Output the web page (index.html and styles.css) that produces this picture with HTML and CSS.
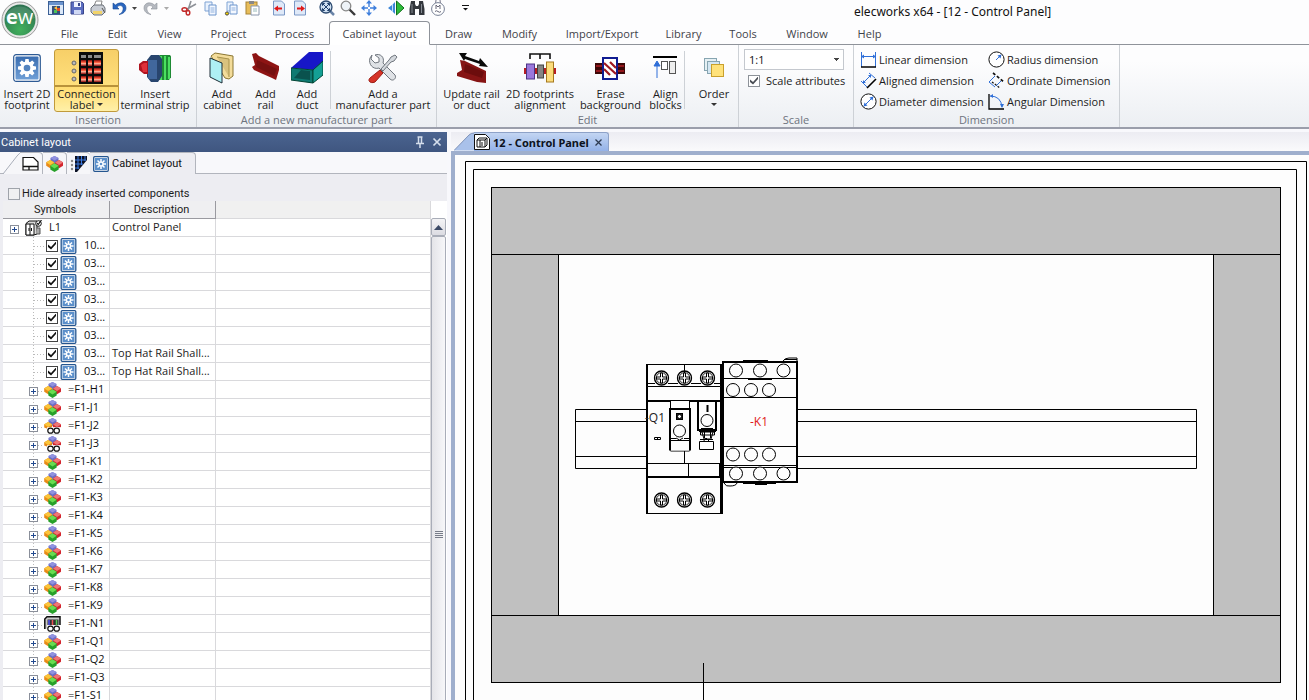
FILE: index.html
```html
<!DOCTYPE html>
<html lang="en">
<head>
<meta charset="utf-8">
<title>elecworks x64 - [12 - Control Panel]</title>
<link rel="stylesheet" href="styles.css">
</head>
<body>
<svg class="defs" aria-hidden="true">
  <defs>
    <linearGradient id="gBlue" x1="0" y1="0" x2="0" y2="1"><stop offset="0" stop-color="#3a6db0"/><stop offset="1" stop-color="#6f9fd6"/></linearGradient>
    <radialGradient id="gLogo" cx=".5" cy=".8" r=".8"><stop offset="0" stop-color="#42b05c"/><stop offset="1" stop-color="#2c7050"/></radialGradient>
    <linearGradient id="gRed" x1="0" y1="0" x2="0" y2="1"><stop offset="0" stop-color="#7c0a0a"/><stop offset=".4" stop-color="#ff5a3c"/><stop offset=".6" stop-color="#ffb29a"/><stop offset="1" stop-color="#8c0a0a"/></linearGradient>
    <symbol id="gear" viewBox="0 0 28 28">
      <rect x=".7" y=".7" width="26.600" height="26.600" rx="2.500" fill="#fff" stroke="#2d5a94" stroke-width="1.200"/>
      <rect x="2.500" y="2.500" width="23" height="23" rx="1" fill="url(#gBlue)"/>
      <g fill="#fff"><circle cx="14" cy="14" r="6.500"/><path d="M12.400 5h3.200l.7 4h-4.600zM12.400 23h3.200l.7-4h-4.600zM5 12.400v3.200l4 .7v-4.600zM23 12.400v3.200l-4 .7v-4.600zM6.500 8.800l2.300-2.300 3.300 2.400-3.200 3.200zM21.500 8.800l-2.300-2.300-3.300 2.400 3.200 3.200zM6.500 19.200l2.300 2.300 3.300-2.400-3.200-3.200zM21.500 19.200l-2.300 2.300-3.300-2.400 3.200-3.200z"/></g>
      <circle cx="14" cy="14" r="3.300" fill="#5484bf"/>
    </symbol>
    <symbol id="flake" viewBox="0 0 16 16">
      <rect x=".7" y=".7" width="14.600" height="14.600" rx="1" fill="#fff" stroke="#24558f" stroke-width="1.300"/>
      <rect x="2" y="2" width="12" height="12" fill="#5b8fca"/>
      <path d="M8 3v10M3 8h10M4.500 4.500l7 7M11.500 4.500l-7 7" stroke="#fff" stroke-width="1.500"/><circle cx="8" cy="8" r="2.600" fill="#fff"/><circle cx="8" cy="8" r="1.300" fill="#5b8fca"/>
    </symbol>
    <symbol id="cubes" viewBox="0 0 17 16">
      <path d="M8.500 0l4 2v3.500L8.500 8l-4-2.500V2z" fill="#6c6fc6"/><path d="M8.500 0l4 2-4 2.500-4-2.500z" fill="#9192e0"/>
      <path d="M13 4l4 2.200v3.600l-4 2.400-4-2.400V6.200z" fill="#d2252e"/><path d="M13 4l4 2.400-4 2.600-4-2.600z" fill="#ee7676"/>
      <path d="M4.200 4l4 2.200v3.600l-4 2.400-4-2.400V6.200z" fill="#e88a18"/><path d="M4.200 4l4 2.400-4 2.600-4-2.600z" fill="#fbc63a"/>
      <path d="M8.500 7.300l4.200 2.500v3.700L8.500 16l-4.200-2.500V9.800z" fill="#27a02a"/><path d="M8.500 7.300l4.200 2.500-4.200 2.700-4.200-2.700z" fill="#68dc50"/>
    </symbol>
    <symbol id="cubesoo" viewBox="0 0 17 16">
      <path d="M8.500 0l4 2v3.500L8.500 8l-4-2.500V2z" fill="#6c6fc6"/><path d="M8.500 0l4 2-4 2.500-4-2.500z" fill="#9192e0"/>
      <path d="M13 4l4 2.200V9.500H9V6.200z" fill="#d2252e"/><path d="M13 4l4 2.400-4 2.600-4-2.600z" fill="#ee7676"/>
      <path d="M4.200 4l4 2.200V9L4 11 .2 9.600V6.200z" fill="#e88a18"/><path d="M4.200 4l4 2.400-4 2.600-4-2.600z" fill="#fbc63a"/>
      <rect x="3" y="9.300" width="14" height="6.700" fill="#fff"/>
      <ellipse cx="6.500" cy="12.700" rx="2.700" ry="2.500" fill="#fff" stroke="#111" stroke-width="1.200"/><ellipse cx="12.700" cy="12.700" rx="2.700" ry="2.500" fill="#fff" stroke="#111" stroke-width="1.200"/>
    </symbol>
    <symbol id="plcoo" viewBox="0 0 17 16">
      <path d="M.8 13V3L3 .8h13V9" fill="#c9c9c9" stroke="#111" stroke-width="1.500"/><rect x="3.500" y="3.500" width="11" height="5.500" fill="#333"/><path d="M5 4v5" stroke="#55f" stroke-width="1.500"/><path d="M8.500 4v5" stroke="#e55" stroke-width="1.500"/><path d="M12.500 4v5" stroke="#5c5" stroke-width="1.500"/>
      <rect x="3" y="9.300" width="14" height="6.700" fill="#fff"/>
      <ellipse cx="6.500" cy="12.700" rx="2.700" ry="2.500" fill="#fff" stroke="#111" stroke-width="1.200"/><ellipse cx="12.700" cy="12.700" rx="2.700" ry="2.500" fill="#fff" stroke="#111" stroke-width="1.200"/>
    </symbol>
    <symbol id="plus" viewBox="0 0 9 9"><rect x=".5" y=".5" width="8" height="8" fill="#fff" stroke="#8a8f9a"/><path d="M2 4.500h5M4.500 2v5" stroke="#234a90"/></symbol>
    <symbol id="screw" viewBox="-8 -8 16 16"><circle r="7" fill="none" stroke="#000" stroke-width="1.400"/><circle r="5.300" fill="none" stroke="#000" stroke-width=".8"/><path d="M-1-5h2v4h4v2H1v4h-2V1h-4v-2h4z" fill="#fff" stroke="#000"/></symbol>
  </defs>
</svg>

<header class="top">
  <button class="logo" aria-label="Application menu">
    <svg viewBox="0 0 38 38"><circle cx="19" cy="19" r="18" fill="#e9e9e9" stroke="#9a9a9a"/><circle cx="19" cy="19" r="15.500" fill="url(#gLogo)"/><path d="M4 17a15.500 15.500 0 0 1 30 0Q19 23 4 17z" fill="#fff" opacity=".12"/></svg>
    <span class="logo-text"><b>e</b>w</span>
  </button>
  <div class="top-main">
    <div class="title-row">
      <div class="quick">
        <svg class="q" viewBox="0 0 16 16"><rect x=".5" y="1.500" width="15" height="13" fill="#dce8f8" stroke="#3b5f95"/><path d="M1 2h14v3H1z" fill="#6a93cf"/><path d="M4 6h8v8H4z" fill="#35507c"/><path d="M6 8l3-2v4z" fill="#ffc83c"/><path d="M9 8h3v3H9z" fill="#e34c26"/><path d="M6 10h3v3H6z" fill="#4cc25a"/></svg>
        <svg class="q" viewBox="0 0 16 16"><path d="M2 2h11l1.500 1.500V14H2z" fill="#5a6cc0" stroke="#38458c"/><path d="M5 2h7v5H5z" fill="#eef2ff"/><path d="M5 10h7v4H5z" fill="#cfd8f4"/><path d="M9 3h2v3H9z" fill="#38458c"/></svg>
        <svg class="q" viewBox="0 0 16 16"><path d="M4 6l2-5h6l-1 5z" fill="#fff" stroke="#888"/><path d="M1 8l3-3h9l2 3v4l-3 3H4l-3-3z" fill="#c9cdd4" stroke="#6b7078"/><path d="M3 11h9v3H3z" fill="#f1d36a"/><path d="M12 8l3 5" stroke="#555"/></svg>
        <svg class="q" viewBox="0 0 16 16"><path d="M2 3v6h6L6 7c3-3 7-1 6 3-.5 2-2 3.500-4 4.500 4-.5 7-3 7-6.500C15 3 9 1 4.500 5z" fill="#2a66c0" stroke="#174a94" stroke-width=".6"/></svg>
        <svg class="caret" viewBox="0 0 5 3"><path d="M0 0h5L2.500 3z" fill="#444"/></svg>
        <svg class="q" viewBox="0 0 16 16"><path d="M14 3v6H8l2-2c-3-3-7-1-6 3 .5 2 2 3.500 4 4.500-4-.5-7-3-7-6.500C1 3 7 1 11.500 5z" fill="#b5b9c0" stroke="#8e939c" stroke-width=".6"/></svg>
        <svg class="caret" viewBox="0 0 5 3"><path d="M0 0h5L2.500 3z" fill="#aaa"/></svg>
        <svg class="q q-lead" viewBox="0 0 16 16"><path d="M15 4L6 9M10 1L7 10" stroke="#8e9298" stroke-width="1.600"/><ellipse cx="3.500" cy="9.500" rx="2.500" ry="1.800" fill="none" stroke="#c22b2b" stroke-width="1.500"/><ellipse cx="7" cy="12.800" rx="1.800" ry="2.300" fill="none" stroke="#c22b2b" stroke-width="1.500"/></svg>
        <svg class="q" viewBox="0 0 16 16"><path d="M3 2h7v9H3z" fill="#eaf2fd" stroke="#7ea3d4"/><path d="M7 5h7v10H7z" fill="#f4f8ff" stroke="#6d95cc"/><path d="M8.500 8h4M8.500 10h4M8.500 12h4" stroke="#8fb0dd"/></svg>
        <svg class="q" viewBox="0 0 16 16"><path d="M4 2h6v9H4z" fill="#eaf2fd" stroke="#7ea3d4"/><path d="M7 5h7v9H7z" fill="#f4f8ff" stroke="#6d95cc"/><path d="M8.500 8h4M8.500 10h4" stroke="#8fb0dd"/><circle cx="4" cy="13.500" r="1.600" fill="#f5d400" stroke="#444"/></svg>
        <svg class="q" viewBox="0 0 16 16"><rect x="2" y="2" width="11" height="12" fill="#e8bd5a" stroke="#a88434"/><rect x="5" y="1" width="5" height="3" fill="#888"/><path d="M7 6h8v9H7z" fill="#fff" stroke="#8a97ad"/><path d="M9 9h4M9 11h4" stroke="#9bb"/></svg>
        <svg class="q q-lead" viewBox="0 0 16 16"><path d="M2.500 1h8l3 3v11h-11z" fill="#dfe9f8" stroke="#7b98c6"/><path d="M3 8.500l4-3v2h4v2H7v2z" fill="#e01818"/></svg>
        <svg class="q" viewBox="0 0 16 16"><path d="M2.500 1h8l3 3v11h-11z" fill="#dfe9f8" stroke="#7b98c6"/><path d="M13 8.500l-4-3v2H5v2h4v2z" fill="#e01818"/></svg>
        <svg class="q q-lead" viewBox="0 0 16 16"><path d="M10 10l5 5" stroke="#6a84a8" stroke-width="2.500"/><circle cx="7" cy="7" r="6" fill="#cfe0f2" stroke="#2c4a70" stroke-width="1.300"/><path d="M3.500 3.500h2l-2 2zM10.500 3.500h-2l2 2zM3.500 10.500h2l-2-2zM10.500 10.500h-2l2-2zM4 4l6 6M10 4l-6 6" fill="#20406c" stroke="#20406c"/></svg>
        <svg class="q" viewBox="0 0 16 16"><path d="M9 9l6 6" stroke="#3a3a3a" stroke-width="2.400"/><circle cx="6" cy="6" r="4.800" fill="#eef3f8" stroke="#888" stroke-width="1.300"/></svg>
        <svg class="q" viewBox="0 0 16 16"><path d="M8 1v14M1 8h14" stroke="#3f7fdc" stroke-width="1.400"/><path d="M8 0l3 3.500H5zM8 16l3-3.500H5zM0 8l3.500-3v6zM16 8l-3.500-3v6z" fill="#3f7fdc"/><rect x="7" y="7" width="2" height="2" fill="#fff"/></svg>
        <svg class="q q-lead" viewBox="0 0 16 16"><path d="M7 2v12l-3-3L0 8l4-3z" fill="#3c86d8"/><path d="M4.500 4v8" stroke="#bfe0f8"/><path d="M8.500 1l7.500 7-7.500 7z" fill="#2ebc3c" stroke="#12701c"/></svg>
        <svg class="q" viewBox="0 0 16 16"><path d="M2 1h4v3l1 2h2l1-2V1h4l1.500 8v6H10V9H6v6H.5V9z" fill="#33373d"/><path d="M3 4v9M12.500 4v9" stroke="#858b93"/></svg>
        <svg class="q" viewBox="0 0 16 16"><path d="M5.500 4L6 0M10.500 4L10 0" stroke="#778"/><circle cx="8" cy="9" r="6.400" fill="#fff" stroke="#778095"/><path d="M6 9V5l2 2 2-2v4M5 11.500q1.500-1.500 3 0t3 0" fill="none" stroke="#667"/></svg>
        <svg class="more" viewBox="0 0 7 6"><path d="M0 .5h7" stroke="#111"/><path d="M1 3h5L3.500 5.500z" fill="#111"/></svg>
      </div>
      <h1 class="title">elecworks x64 - [12 - Control Panel]</h1>
    </div>
    <nav class="menu">
      <button>File</button><button>Edit</button><button>View</button><button>Project</button><button>Process</button><button class="active">Cabinet layout</button><button>Draw</button><button>Modify</button><button>Import/Export</button><button>Library</button><button>Tools</button><button>Window</button><button>Help</button>
    </nav>
  </div>
</header>

<section class="ribbon">
  <div class="group g-insert">
    <div class="tools">
      <button class="tool"><svg class="ico"><use href="#gear" x="2" y="2" width="28" height="28"/></svg><span>Insert 2D<br>footprint</span></button>
      <button class="tool pressed"><svg class="ico" viewBox="0 0 32 32"><rect x="8" y="0" width="24" height="32" fill="#0b0b0b"/><g fill="#8b8b8b"><rect x="10" y="3" width="5" height="3"/><rect x="17" y="3" width="4" height="3"/><rect x="23" y="3" width="7" height="3"/></g><g fill="url(#gRed)"><rect x="10" y="8" width="5" height="6"/><rect x="17" y="8" width="4" height="6"/><rect x="23" y="8" width="7" height="6"/><rect x="10" y="16" width="5" height="6"/><rect x="17" y="16" width="4" height="6"/><rect x="23" y="16" width="7" height="6"/><rect x="10" y="24" width="5" height="6"/><rect x="17" y="24" width="4" height="6"/><rect x="23" y="24" width="7" height="6"/></g><g fill="#bbb" stroke="#666"><circle cx="3" cy="11" r="2"/><circle cx="3" cy="19" r="2"/><circle cx="3" cy="27" r="2"/></g></svg><span>Connection<br>label <i class="arrow"></i></span></button>
      <button class="tool"><svg class="ico" viewBox="0 0 32 32"><path d="M18 5l3-2h10l2 3v18l-3 4H18z" fill="#1e8a34"/><path d="M22 4v24M26 4v24M30 5v22" stroke="#4be060" stroke-width="2"/><path d="M8 8l4-5h8l3 4v17l-4 6h-7l-4-5z" fill="#28456e"/><path d="M9 8h9v19H9z" fill="#41679c"/><path d="M0 12l4-3h5v13H5l-5-4z" fill="#b01420"/><path d="M2 13l3-2h3v9H4z" fill="#e0303a"/></svg><span>Insert<br>terminal strip</span></button>
    </div>
    <div class="caption">Insertion</div>
  </div>
  <div class="group g-part">
    <div class="tools">
      <button class="tool"><svg class="ico" viewBox="0 0 32 32"><path d="M5 4l4-3 18 3v20l-4 3-4-1z" fill="#f3dc9a" stroke="#8a7632"/><path d="M11 5l12 2v18" fill="#d9c27e" stroke="#a8924a"/><path d="M4 6l12 5v20L4 25z" fill="#aef0f4" stroke="#1c2d36"/></svg><span>Add<br>cabinet</span></button>
      <button class="tool"><svg class="ico" viewBox="0 0 32 32"><path d="M2 2l4-1 3 3 20 10v4l-3 10-4-2L4 18l-2-3 3-2z" fill="#8e1414"/><path d="M7 8l20 9-3 7L6 15z" fill="#761010"/></svg><span>Add<br>rail</span></button>
      <button class="tool"><svg class="ico" viewBox="0 0 32 32"><path d="M0 16L18 0h14v11L22 18z" fill="#1717c8"/><path d="M0 16l22 2v13L0 28z" fill="#0e7a72" stroke="#043"/><path d="M22 18L32 9v14l-10 8z" fill="#14a095" stroke="#043"/><path d="M3 26l7-8 9 1v9z" fill="#0a524e"/></svg><span>Add<br>duct</span></button>
      <i class="bar"></i>
      <button class="tool"><svg class="ico" viewBox="0 0 32 32"><path d="M5 3L4 7l4 4 4-1v-4L8 3c5-2 10 2 8 8l12 12c2 3-2 7-5 4L12 16C6 18 1 12 3 6z" fill="#dfe2e6" stroke="#71777f"/><path d="M28 3l2 2-3 4-3 1-8 9-2-2 8-9 2-3z" fill="#d4d8dd" stroke="#71777f"/><path d="M13 18l3 3-8 9c-4 2-8-1-5-4z" fill="#d63328" stroke="#9c1e14"/></svg><span>Add a<br>manufacturer part</span></button>
    </div>
    <div class="caption">Add a new manufacturer part</div>
  </div>
  <div class="group g-edit">
    <div class="tools">
      <button class="tool"><svg class="ico" viewBox="0 0 32 32"><path d="M3 1l8 0-2 3 14 5 1-3 8 9-9-1 1-2L9 7 8 9z" fill="#0a0a0a"/><path d="M4 8l5 1 21 10v12l-9-1L1 24v-3l5-3z" fill="#861414"/><path d="M9 12l19 8-2 6L8 20z" fill="#6c0d0d"/></svg><span>Update rail<br>or duct</span></button>
      <button class="tool"><svg class="ico" viewBox="0 0 32 32"><path d="M6 7V2h20v5M16 2v5" fill="none" stroke="#111" stroke-width="1.600"/><rect x="0" y="16" width="32" height="6" fill="#b61e24"/><rect x="2.500" y="12" width="8" height="15" fill="#9a78dc" stroke="#4c3586"/><rect x="13.500" y="13" width="6" height="13" fill="#858585" stroke="#444"/><rect x="22.500" y="10" width="7" height="20" fill="#fbdc7c" stroke="#a5781e"/></svg><span>2D footprints<br>alignment</span></button>
      <button class="tool"><svg class="ico" viewBox="0 0 32 32"><rect x="1" y="11" width="30" height="11" fill="#3c0707"/><path d="M2 14h28M2 19h28" stroke="#b01c24" stroke-width="1.500"/><rect x="9" y="6" width="14" height="21" fill="#fff" stroke="#101c92" stroke-width="2"/><path d="M10 11l12 11M10 17l6 6M16 10l6 6" stroke="#a01820" stroke-width="2.200"/></svg><span>Erase<br>background</span></button>
      <button class="tool"><svg class="ico" viewBox="0 0 32 32"><path d="M4 5h24" stroke="#000" stroke-width="2"/><path d="M8 26V12M5 14l3-5 3 5z" fill="#2f6fd8" stroke="#2f6fd8"/><rect x="12.500" y="9.500" width="6" height="8" fill="#fff" stroke="#555"/><rect x="20.500" y="9.500" width="6" height="12" fill="#eee" stroke="#555"/></svg><span>Align<br>blocks</span></button>
      <i class="bar"></i>
      <button class="tool"><svg class="ico" viewBox="0 0 32 32"><rect x="6.500" y="6.500" width="12" height="12" fill="#e5f0f4" stroke="#87a5b1"/><rect x="9.500" y="9.500" width="12" height="12" fill="#d4e7f3" stroke="#87a5b1"/><rect x="13.500" y="12.500" width="12" height="12" fill="#ffe27a" stroke="#c9a02c"/></svg><span>Order<br><i class="arrow"></i></span></button>
    </div>
    <div class="caption">Edit</div>
  </div>
  <div class="group g-scale">
    <div class="scale-body">
      <select aria-label="Scale"><option>1:1</option></select>
      <label class="scale-check"><input type="checkbox" class="cb grey" checked>Scale attributes</label>
    </div>
    <div class="caption">Scale</div>
  </div>
  <div class="group g-dim">
    <div class="dims">
      <button class="dim"><svg viewBox="0 0 17 17"><path d="M1.500 1v15M15.500 1v15M1 5.500h15" fill="none" stroke="#2f6fd8"/><path d="M1 16h15" stroke="#000" stroke-width="1.500"/><path d="M1 5.500l3-2v4zM16 5.500l-3-2v4z" fill="#2f6fd8"/></svg>Linear dimension</button>
      <button class="dim"><svg viewBox="0 0 17 17"><path d="M1 9l6 6M9 1l6 5M3 11l8-8" stroke="#2f6fd8"/><path d="M3 11l3 0-3-3zM11 3v3l-3-3z" fill="#2f6fd8"/><path d="M7 16l9-9" stroke="#000" stroke-width="1.600"/></svg>Aligned dimension</button>
      <button class="dim"><svg viewBox="0 0 17 17"><circle cx="8.500" cy="8.500" r="7.600" fill="#fff" stroke="#111"/><path d="M4 13l9-9" stroke="#2f6fd8"/><path d="M3.500 13.500l1-4 3 3zM13.500 3.500l-4 1 3 3z" fill="#2f6fd8"/></svg>Diameter dimension</button>
      <button class="dim"><svg viewBox="0 0 17 17"><circle cx="8.500" cy="8.500" r="7.600" fill="#fff" stroke="#111"/><path d="M8 9l5-5" stroke="#2f6fd8"/><path d="M13.500 3.500l-4 1 3 3z" fill="#2f6fd8"/></svg>Radius dimension</button>
      <button class="dim"><svg viewBox="0 0 17 17"><path d="M5 1l11 9" stroke="#111" stroke-width="1.700" stroke-dasharray="3 2"/><path d="M7 4L1 10l6 5M13 9l-5 5" stroke="#2f6fd8" fill="none"/><path d="M4 10l8 6" stroke="#111" stroke-width="1.300" stroke-dasharray="2 1.500"/></svg>Ordinate Dimension</button>
      <button class="dim"><svg viewBox="0 0 17 17"><path d="M1 1v15h15" fill="none" stroke="#000" stroke-width="1.300"/><path d="M2 3Q13 3 14 14" fill="none" stroke="#2f6fd8"/><path d="M14 15l-2-4h4zM2 3l3-2v4z" fill="#2f6fd8"/></svg>Angular Dimension</button>
    </div>
    <div class="caption">Dimension</div>
  </div>
</section>

<main class="work">
  <aside class="dock">
    <div class="dock-head"><h2>Cabinet layout</h2>
      <button aria-label="Pin"><svg viewBox="0 0 10 12"><path d="M2.500 1h5M3.500 1v6M6.500 1v6M1 7.500h8M5 8v4" stroke="#d5deec" stroke-width="1.500"/></svg></button>
      <button aria-label="Close"><svg viewBox="0 0 10 12"><path d="M1.500 2.500l7 7M8.500 2.500l-7 7" stroke="#d5deec" stroke-width="1.700"/></svg></button>
    </div>
    <div class="dock-tabs">
      <svg class="slant" viewBox="0 0 20 22"><path d="M3 22L17 4q2-3 5-3.500V22z" fill="#f6f6f9"/><path d="M3 22L17 4q2-3 5-3.500" fill="none" stroke="#a9aeb9"/></svg>
      <button class="dtab first" aria-label="Documents"><svg viewBox="0 0 17 16"><path d="M1 14V1.500h10.500L16 6v8z" fill="#fff" stroke="#111" stroke-width="1.200"/><path d="M1 10.500h15M7 10.500V14" stroke="#111" stroke-width="1.300"/></svg></button>
      <button class="dtab" aria-label="Components"><svg><use href="#cubes" width="17" height="16"/></svg></button>
      <button class="dtab last" aria-label="Terminals"><svg viewBox="0 0 17 16"><path d="M5 0h12v4L7 16H5z" fill="#0c1226"/><path d="M8 0v13M11.500 0v9M15 0v5M5 4h11M5 8h8M5 12h4" stroke="#3c7ae0"/><g fill="#888"><circle cx="2" cy="5" r="1.200"/><circle cx="2" cy="9" r="1.200"/><circle cx="2" cy="13" r="1.200"/></g></svg></button>
      <button class="dtab on"><svg><use href="#flake" width="16" height="16"/></svg><span>Cabinet layout</span></button>
    </div>
    <div class="dock-body">
      <label class="hide"><input type="checkbox" class="cb flat">Hide already inserted components</label>
      <div class="list">
        <table class="tree">
          <colgroup><col class="c1"><col class="c2"><col></colgroup>
          <thead><tr><th>Symbols</th><th>Description</th><td></td></tr></thead>
          <tbody>
            <tr><td><div class="node root"><svg class="pm"><use href="#plus"/></svg><svg viewBox="0 0 17 16"><path d="M1 3.500L4 1h8v13l-3 1H1z" fill="#d8d8d8" stroke="#111"/><path d="M1 4h8v11H1zM5 4v11" fill="#fff" stroke="#111"/><path d="M4 8v3M6.500 8v3" stroke="#111"/><path d="M12 8h3v6h-4" fill="#aaa" stroke="#555"/><circle cx="13.500" cy="3.500" r="2.800" fill="#fff" stroke="#111"/><path d="M12 3l1.200 1.500L16.500 0" fill="none" stroke="#111" stroke-width="1.200"/></svg><span>L1</span></div></td><td>Control Panel</td><td></td></tr>
            <tr><td><label class="node leaf"><input type="checkbox" class="cb" checked><svg><use href="#flake"/></svg><span>10...</span></label></td><td></td><td></td></tr>
            <tr><td><label class="node leaf"><input type="checkbox" class="cb" checked><svg><use href="#flake"/></svg><span>03...</span></label></td><td></td><td></td></tr>
            <tr><td><label class="node leaf"><input type="checkbox" class="cb" checked><svg><use href="#flake"/></svg><span>03...</span></label></td><td></td><td></td></tr>
            <tr><td><label class="node leaf"><input type="checkbox" class="cb" checked><svg><use href="#flake"/></svg><span>03...</span></label></td><td></td><td></td></tr>
            <tr><td><label class="node leaf"><input type="checkbox" class="cb" checked><svg><use href="#flake"/></svg><span>03...</span></label></td><td></td><td></td></tr>
            <tr><td><label class="node leaf"><input type="checkbox" class="cb" checked><svg><use href="#flake"/></svg><span>03...</span></label></td><td></td><td></td></tr>
            <tr><td><label class="node leaf"><input type="checkbox" class="cb" checked><svg><use href="#flake"/></svg><span>03...</span></label></td><td>Top Hat Rail Shall...</td><td></td></tr>
            <tr><td><label class="node leaf"><input type="checkbox" class="cb" checked><svg><use href="#flake"/></svg><span>03...</span></label></td><td>Top Hat Rail Shall...</td><td></td></tr>
            <tr><td><div class="node comp"><svg class="pm"><use href="#plus"/></svg><svg><use href="#cubes"/></svg><span>=F1-H1</span></div></td><td></td><td></td></tr>
            <tr><td><div class="node comp"><svg class="pm"><use href="#plus"/></svg><svg><use href="#cubes"/></svg><span>=F1-J1</span></div></td><td></td><td></td></tr>
            <tr><td><div class="node comp"><svg class="pm"><use href="#plus"/></svg><svg><use href="#cubesoo"/></svg><span>=F1-J2</span></div></td><td></td><td></td></tr>
            <tr><td><div class="node comp"><svg class="pm"><use href="#plus"/></svg><svg><use href="#cubesoo"/></svg><span>=F1-J3</span></div></td><td></td><td></td></tr>
            <tr><td><div class="node comp"><svg class="pm"><use href="#plus"/></svg><svg><use href="#cubes"/></svg><span>=F1-K1</span></div></td><td></td><td></td></tr>
            <tr><td><div class="node comp"><svg class="pm"><use href="#plus"/></svg><svg><use href="#cubes"/></svg><span>=F1-K2</span></div></td><td></td><td></td></tr>
            <tr><td><div class="node comp"><svg class="pm"><use href="#plus"/></svg><svg><use href="#cubes"/></svg><span>=F1-K3</span></div></td><td></td><td></td></tr>
            <tr><td><div class="node comp"><svg class="pm"><use href="#plus"/></svg><svg><use href="#cubes"/></svg><span>=F1-K4</span></div></td><td></td><td></td></tr>
            <tr><td><div class="node comp"><svg class="pm"><use href="#plus"/></svg><svg><use href="#cubes"/></svg><span>=F1-K5</span></div></td><td></td><td></td></tr>
            <tr><td><div class="node comp"><svg class="pm"><use href="#plus"/></svg><svg><use href="#cubes"/></svg><span>=F1-K6</span></div></td><td></td><td></td></tr>
            <tr><td><div class="node comp"><svg class="pm"><use href="#plus"/></svg><svg><use href="#cubes"/></svg><span>=F1-K7</span></div></td><td></td><td></td></tr>
            <tr><td><div class="node comp"><svg class="pm"><use href="#plus"/></svg><svg><use href="#cubes"/></svg><span>=F1-K8</span></div></td><td></td><td></td></tr>
            <tr><td><div class="node comp"><svg class="pm"><use href="#plus"/></svg><svg><use href="#cubes"/></svg><span>=F1-K9</span></div></td><td></td><td></td></tr>
            <tr><td><div class="node comp"><svg class="pm"><use href="#plus"/></svg><svg><use href="#plcoo"/></svg><span>=F1-N1</span></div></td><td></td><td></td></tr>
            <tr><td><div class="node comp"><svg class="pm"><use href="#plus"/></svg><svg><use href="#cubes"/></svg><span>=F1-Q1</span></div></td><td></td><td></td></tr>
            <tr><td><div class="node comp"><svg class="pm"><use href="#plus"/></svg><svg><use href="#cubes"/></svg><span>=F1-Q2</span></div></td><td></td><td></td></tr>
            <tr><td><div class="node comp"><svg class="pm"><use href="#plus"/></svg><svg><use href="#cubes"/></svg><span>=F1-Q3</span></div></td><td></td><td></td></tr>
            <tr><td><div class="node comp"><svg class="pm"><use href="#plus"/></svg><svg><use href="#cubes"/></svg><span>=F1-S1</span></div></td><td></td><td></td></tr>
          </tbody>
        </table>
        <div class="scroll">
          <button aria-label="Scroll up"><svg viewBox="0 0 9 5"><path d="M0 5L4.500 0 9 5z" fill="#3c4a66"/></svg></button>
          <div class="thumb"><i class="grip"></i></div>
        </div>
      </div>
    </div>
  </aside>

  <section class="doc">
    <div class="doc-tabs">
      <svg class="doc-slant" viewBox="0 0 20 18"><path d="M0 18L15 2.500Q17 .5 20 .5V18z" fill="#a9c1ea"/><path d="M0 18L15 2.500Q17 .5 20 .5" fill="none" stroke="#7f93b8"/></svg>
      <div class="doc-tab">
        <svg viewBox="0 0 16 16"><path d="M.5.5h11l4 4v11H.5z" fill="#fff" stroke="#111"/><path d="M3 6l2-2h8v7l-2 2H3zM3 6h8v7M11 6l2-2M6 6v7M8 8v4" fill="none" stroke="#111"/></svg>
        <span>12 - Control Panel</span>
        <button aria-label="Close document"><svg viewBox="0 0 7 7"><path d="M.5.5l6 6M6.500.5l-6 6" stroke="#2c3950" stroke-width="1.300"/></svg></button>
      </div>
    </div>
    <div class="canvas">
      <svg class="drawing" viewBox="455 155 854 545" preserveAspectRatio="xMinYMin slice">
        <g fill="none" stroke="#000" stroke-width="1">
          <path d="M465.500 710V161.500H1306.500V710M473.500 710V169.500H1296.500V710"/>
          <rect x="491.500" y="187.500" width="789" height="495" fill="#c0c0c0"/>
          <rect x="558.500" y="254.500" width="655" height="361" fill="#fdfdfd"/>
          <path d="M491 254.500H558M1214 254.500h66M491 615.500h67M1214 615.500h66M703.500 663v47"/>
          <path d="M575.500 409.500h621v59h-621zM575 421.500h621M575 456.500h621"/>
        </g>
        <!-- circuit breaker Q1 -->
        <g fill="#fdfdfd" stroke="#000" stroke-width="1">
          <rect x="646.500" y="364.500" width="76" height="149"/>
          <path d="M647.500 365v148M721.500 365v148M720.500 365v148M684.500 365v18"/>
        </g>
        <use href="#screw" x="653.500" y="370" width="16" height="16"/><use href="#screw" x="676.500" y="370" width="16" height="16"/><use href="#screw" x="699.500" y="370" width="16" height="16"/>
        <use href="#screw" x="653.500" y="492" width="16" height="16"/><use href="#screw" x="676.500" y="492" width="16" height="16"/><use href="#screw" x="699.500" y="492" width="16" height="16"/>
        <g fill="#fdfdfd" stroke="#000" stroke-width="1">
          <path d="M647.500 386.500h73v15h-73z"/><path d="M647 383.500h8M668 383.500h10M691 383.500h10M714 383.500h7"/><path d="M647 401h75" stroke-width="2"/>
          <path d="M684.500 450v13M647 463.500h75M688.500 463v13M719.500 464v13"/><path d="M647 477h75" stroke-width="2"/>
          <path d="M670.500 401v50h19v-50"/><path d="M670 450.500V409h20v41.500" stroke-width="2"/><path d="M670 438.500h6M684 438.500h6M670 440.500h19"/>
          <rect x="676.500" y="413.500" width="6" height="6" fill="#222"/><circle cx="679.500" cy="416.500" r="2"/>
          <circle cx="679.500" cy="431" r="6"/><path d="M676 438l3.500 2 3.500-2"/>
          <path d="M698 402v28h18v-28M699 431h17" stroke-width="2"/><path d="M707.500 405v7" stroke-width="2"/><circle cx="707" cy="420.500" r="6"/><path d="M701 428.500h12"/>
          <path d="M700.500 432h14v3h-14zM702 432l2 7h7l2-7M704.500 432v6M710.500 432v6M699.500 441.500h14v8h-14zM703 442l3-4 4 4"/><path d="M700 439.500h13"/>
          <path d="M654.500 437.500h6v2h-6zM657.500 437v3"/>
        </g>
        <!-- contactor K1 -->
        <g fill="#fdfdfd" stroke="#000" stroke-width="1">
          <path d="M783 361q2-3 6-3h8v4M784 359.500h13M724 483q2 4 6 3 6 0 7-3"/>
          <rect x="723" y="362" width="74" height="120" stroke-width="2"/>
          <path d="M743 360.500h25M748 379.500h24M755 484.500h12M743 483.500h33"/>
          <path d="M723 378.500h74M723 397.500h74M723 446.500h74M723 465.500h74M723 467.500h74"/>
          <circle cx="736" cy="370.500" r="6.500"/><circle cx="760" cy="370.500" r="6.500"/><circle cx="783.500" cy="370.500" r="6.500"/>
          <circle cx="733" cy="390" r="6.500"/><circle cx="751" cy="390" r="6.500"/><circle cx="769" cy="390" r="6.500"/>
          <circle cx="733" cy="454.500" r="6.500"/><circle cx="751" cy="454.500" r="6.500"/><circle cx="769" cy="454.500" r="6.500"/>
          <circle cx="736" cy="473.500" r="6.500"/><circle cx="760" cy="473.500" r="6.500"/><circle cx="783.500" cy="473.500" r="6.500"/>
        </g>
        <text class="tag" x="645" y="422">-Q1</text>
        <text class="tag red" x="750" y="426">-K1</text>
      </svg>
    </div>
  </section>
</main>
</body>
</html>
```
FILE: styles.css
```css
* { box-sizing: border-box; }
body {
  margin: 0;
  height: 100vh;
  display: flex;
  flex-direction: column;
  overflow: hidden;
  background: #fdfdfe;
  color: #1c1c1c;
  font: 11px/13px "Open Sans", "Noto Sans", sans-serif;
}
button { border: 0; padding: 0; margin: 0; background: none; color: inherit; font: inherit; }
h1, h2 { margin: 0; font: inherit; }
svg { display: block; flex: none; }
.defs { position: absolute; width: 0; height: 0; }

/* title and menu */
.top { display: flex; flex: none; height: 45px; border-bottom: 1px solid #8f939a; }
.logo { position: relative; width: 46px; height: 40px; padding: 0 0 0 1px; flex: none; }
.logo svg { width: 38px; height: 38px; }
.logo-text { position: absolute; left: 6px; top: 7px; color: #fff; font-size: 20px; line-height: 20px; }
.top-main { flex: 1; display: flex; flex-direction: column; justify-content: space-between; min-width: 0; }
.title-row { display: grid; grid-template-columns: 808px 1fr; height: 21px; }
.quick { display: flex; align-items: center; height: 16px; gap: 5px; padding-left: 2px; }
.q { width: 16px; height: 16px; }
.caret { width: 5px; height: 3px; margin-right: 1px; }
.q-lead { margin-left: 6px; }
.more { width: 7px; height: 6px; margin-left: 11px; }
.title { font: 12px/16px "Noto Sans", sans-serif; padding-top: 4px; color: #111; white-space: nowrap; }
.menu { display: grid; grid-template-columns: 47px 49px 55px 63px 69px 101px 57px 65px 100px 63px 56px 72px 53px; height: 24px; margin-bottom: -1px; color: #3f434a; }
.menu button { padding-top: 1px; border: 1px solid transparent; }
.menu .active { border-color: #8f939a #8f939a #fff; border-radius: 4px 4px 0 0; background: #fff; }

/* ribbon */
.ribbon { display: grid; grid-template-columns: 197px 240px 302px 115px 266px; flex: none; height: 84px; background: linear-gradient(#fdfdfe 20%, #eceff3); border-bottom: 2px solid #9a9eab; }
.group { display: flex; flex-direction: column; justify-content: space-between; border-right: 1px solid #cdd1d6; min-width: 0; }
.caption { text-align: center; color: #6e747e; line-height: 15px; }
.tools { display: flex; height: 66px; padding-top: 4px; }
.tool { display: flex; flex-direction: column; align-items: center; height: 63px; line-height: 11px; padding-top: 2px; white-space: nowrap; border: 1px solid transparent; }
.tool span { padding-top: 4px; }
.ico { width: 32px; height: 32px; }
.g-insert .tools { display: grid; grid-template-columns: 54px 65px 72px; }
.g-part .tools { display: grid; grid-template-columns: 50px 37px 46px 3px 100px; }
.g-edit .tools { display: grid; grid-template-columns: 69px 68px 73px 37px 9px 42px; }
.g-edit .tool, .g-part .tool { justify-self: center; }
.pressed { border-color: #c09a3c; border-radius: 3px; background: linear-gradient(#f7cf68, #ffe07c 58%, #b8923a 58%, #b8923a 60%, #ffdc70 60%, #fff0a8); }
.bar { width: 1px; height: 58px; margin-top: 2px; background: #cdd1d6; }
.arrow { display: inline-block; border: 3px solid transparent; border-top-color: #333; border-bottom: 0; vertical-align: 3px; }
.scale-body { display: flex; flex-direction: column; gap: 4px; padding: 4px 9px 0 5px; }
.scale-body select { appearance: none; height: 21px; padding: 0 4px; border: 1px solid #c4c8ce; border-radius: 0; font: inherit; color: #111; background: linear-gradient(#444, #444) no-repeat right 4px top 8px / 5px 1px, linear-gradient(#444, #444) no-repeat right 5px top 9px / 3px 1px, linear-gradient(#444, #444) no-repeat right 6px top 10px / 1px 1px, #fff; }
.scale-check { display: flex; align-items: center; gap: 6px; padding-left: 4px; white-space: nowrap; }
.dims { display: grid; grid-template: repeat(3, 21px) / 128px 1fr; grid-auto-flow: column; padding: 4px 0 0 6px; }
.dim { display: flex; align-items: center; gap: 2px; white-space: nowrap; }
.dim svg { width: 17px; height: 17px; }

/* check boxes */
.cb { appearance: none; display: grid; place-items: center; flex: none; width: 12px; height: 12px; margin: 0; border: 1px solid #444; background: #fff; }
.cb:checked::before { content: ""; width: 8px; height: 8px; background: #111; clip-path: polygon(0 38%, 38% 68%, 100% 0, 100% 32%, 38% 100%, 0 70%); }
.cb.flat { border-color: #9fa3aa; background: #f0f0f1; }
.cb.grey { border-color: #8d9299; }
.cb.grey::before { background: #4a4e55; }

/* left dock */
.work { display: grid; grid-template-columns: 447px 1fr; gap: 4px; flex: 1; min-height: 0; padding-top: 3px; background: #f8f8fc; }
.dock { display: flex; flex-direction: column; min-height: 0; background: #ededf2; }
.dock-head { display: flex; align-items: center; gap: 7px; flex: none; height: 20px; padding: 0 5px 0 1px; background: linear-gradient(#4b6490, #3f5680); color: #fff; }
.dock-head h2 { flex: 1; }
.dock-head svg { width: 10px; height: 12px; }
.dock-head h2, .dtab, .hide, .tree th { font-family: Roboto, sans-serif; }
.dock-head h2, .dtab { font-size: 11px; }
.dock-tabs { display: flex; flex: none; height: 22px; background: #f8f8fb; border-bottom: 1px solid #b2b5bd; }
.slant { width: 20px; height: 22px; }
.dtab { display: flex; align-items: center; gap: 2px; height: 22px; padding: 0 3px; border: 1px solid #b2b5bd; border-width: 1px 1px 0 0; border-radius: 0 4px 0 0; background: #f6f6f9; color: #111; }
.dtab.first { padding-left: 2px; }
.dtab.last { border-right: 0; }
.dtab svg { width: 17px; height: 16px; }
.dtab.on { padding-right: 13px; background: #ededf2; }
.dock-body { display: flex; flex-direction: column; flex: 1; min-height: 0; padding-left: 3px; }
.hide { display: flex; align-items: center; gap: 2px; height: 27px; padding: 13px 0 0 5px; flex: none; line-height: 14px; color: #1c1c1c; }
.list { display: flex; flex: 1; min-height: 0; overflow: hidden; background: #fff; }
.tree { width: 428px; border-collapse: separate; border-spacing: 0; table-layout: fixed; align-self: flex-start; }
.c1 { width: 107px; }
.c2 { width: 106px; }
.tree th, .tree td { height: 18px; padding: 0 0 2px 2px; border: 1px solid #d9d9dc; border-width: 0 1px 1px 0; font-weight: normal; line-height: 15px; white-space: nowrap; overflow: hidden; }
.tree th { padding: 0 2px 0 0; background: #efeff1; border-color: #9a9aa0; }
.tree td:first-child { padding: 0; }
.tree thead td { background: #f0f0f0; border-color: #d9d9dc; }
.node { display: grid; align-items: center; height: 17px; color: #111; }
.node span { padding-bottom: 2px; }
.node svg { width: 17px; height: 16px; }
.node .pm { width: 9px; height: 9px; margin-top: 3px; }
.root { grid-template-columns: 15px 24px 1fr; padding-left: 7px; }
.leaf { grid-template-columns: 14px 24px 1fr; padding-left: 43px; background: repeating-linear-gradient(90deg, #bbb 0 1px, transparent 1px 3px) no-repeat 31px 9px / 12px 1px, repeating-linear-gradient(#bbb 0 1px, transparent 1px 3px) no-repeat 30px 0 / 1px 17px; }
.comp { grid-template-columns: 15px 24px 1fr; padding-left: 26px; background: repeating-linear-gradient(90deg, #bbb 0 1px, transparent 1px 3px) no-repeat 35px 10px / 6px 1px, repeating-linear-gradient(#bbb 0 1px, transparent 1px 3px) no-repeat 30px 0 / 1px 17px; }
.scroll { display: flex; flex-direction: column; flex: 1; padding: 17px 1px 0 0; }
.scroll button { display: grid; place-items: center; flex: none; height: 18px; border: 1px solid #a9adb8; border-radius: 2px; background: linear-gradient(#f4f4f6, #dcdce2); }
.scroll button svg { width: 9px; height: 5px; }
.thumb { display: grid; place-items: center; flex: none; height: 596px; border: 1px solid #a9adb8; border-radius: 2px; background: linear-gradient(90deg, #e4e4e8, #f7f7f9); }
.grip { width: 8px; height: 7px; background: repeating-linear-gradient(#777c88 0 1px, transparent 1px 2px); }

/* document area */
.doc { display: flex; flex-direction: column; min-width: 0; min-height: 0; }
.doc-tabs { display: flex; flex: none; height: 19px; padding: 0 0 0 3px; background: linear-gradient(#ececf2, #fafafc); }
.doc-slant { width: 20px; height: 19px; }
.doc-tab { display: flex; align-items: center; gap: 3px; padding-right: 6px; border: 1px solid #8ea2c8; border-width: 1px 1px 0 0; border-radius: 0 3px 0 0; background: linear-gradient(#c3d5f2, #94b2e8); font: 700 11px/13px "Noto Sans", sans-serif; color: #0c1220; }
.doc-tab > svg { width: 16px; height: 16px; }
.doc-tab button { padding-left: 3px; }
.doc-tab button svg { width: 7px; height: 7px; }
.canvas { flex: 1; min-height: 0; overflow: hidden; border: 4px solid #9fafcd; border-width: 4px 0 0 4px; background: #fdfdfd; }
.drawing { width: 100%; height: 100%; }
.tag { font: 12px "Open Sans", sans-serif; fill: #222; }
.tag.red { fill: #e01818; }
```
